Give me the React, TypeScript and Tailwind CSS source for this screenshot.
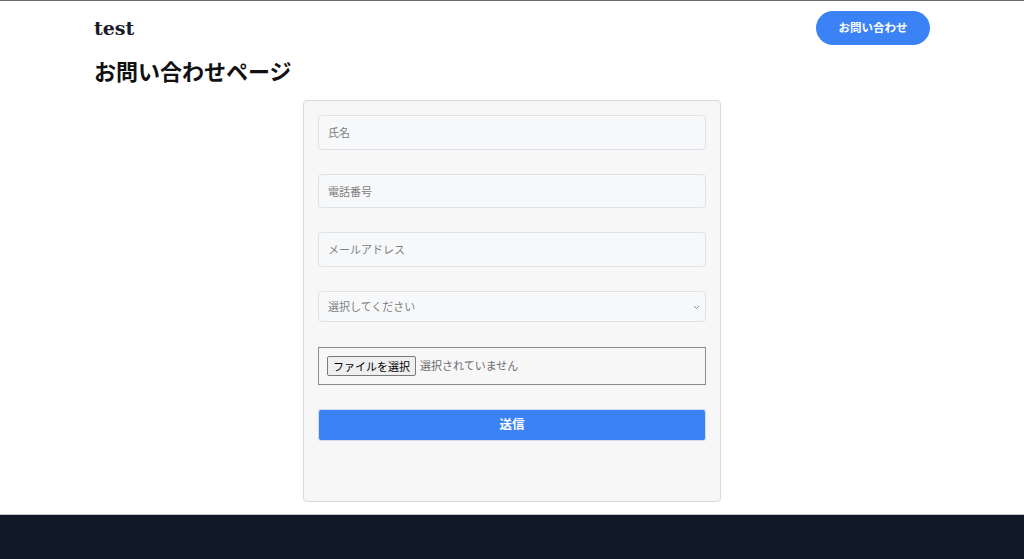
const jp = { fontFamily: '"Noto Sans CJK JP", "Noto Sans", sans-serif' }

function TextField({ placeholder }: { placeholder: string }) {
  return (
    <input
      type="text"
      placeholder={placeholder}
      className="h-[34.5px] w-full rounded-[4px] border border-[#dfe1e5] bg-[#f7f8fa] px-[9px] text-[11px] text-gray-800 outline-none placeholder:text-[#808080]"
    />
  )
}

export default function App() {
  return (
    <div className="flex min-h-screen flex-col border-t border-[#6b6b6b] bg-white" style={jp}>
      <header className="mx-auto flex w-[836px] items-center justify-between pt-[10px]">
        <a
          href="#"
          className="text-[19px] font-bold leading-none text-[#1a1a2a]"
          style={{ fontFamily: '"DejaVu Serif", "Noto Sans CJK JP", serif' }}
        >
          test
        </a>
        <button className="h-[34px] w-[114px] rounded-full bg-[#3b82f6] text-[11.5px] font-bold text-white">
          お問い合わせ
        </button>
      </header>

      <h1 className="mx-auto mt-[9px] w-[836px] text-[22px] font-bold leading-[32px] text-[#111]">
        お問い合わせページ
      </h1>

      <form
        onSubmit={(e) => e.preventDefault()}
        className="mx-auto mt-[14px] flex w-[418px] flex-col rounded-[4px] border border-[#dadada] bg-[#f7f7f7] px-[14px] pb-[60px] pt-[14px]"
      >
        <div className="flex flex-col gap-[24px]">
          <TextField placeholder="氏名" />
          <TextField placeholder="電話番号" />
          <TextField placeholder="メールアドレス" />
        </div>

        {/* select */}
        <div className="relative mt-[24px]">
          <select
            defaultValue=""
            className="h-[31.5px] w-full appearance-none rounded-[4px] border border-[#dfe1e5] bg-[#f7f8fa] px-[9px] text-[11px] text-[#808080] outline-none"
          >
            <option value="" disabled>
              選択してください
            </option>
          </select>
          <svg
            className="pointer-events-none absolute right-[6px] top-[14px]"
            width="7"
            height="5"
            viewBox="0 0 7 5"
            fill="none"
          >
            <path d="M1 1l2.5 2.5L6 1" stroke="#8a8a8a" strokeWidth="1" />
          </svg>
        </div>

        {/* file picker */}
        <div className="mt-[24.5px] flex h-[38px] items-center gap-[4px] border border-[#8a8a8a] px-[8px]">
          <span className="rounded-[2px] border border-[#7a7a7a] bg-[#efefef] px-[5px] py-[1px] text-[11px] leading-[16px] text-black">
            ファイルを選択
          </span>
          <span className="text-[11px] text-[#6b6b6b]">選択されていません</span>
        </div>

        <button
          type="submit"
          className="mt-[24px] h-[32px] w-full rounded-[3px] border border-[#d4dbe6] bg-[#3b82f6] text-[12.5px] font-bold text-white"
        >
          送信
        </button>
      </form>

      <footer className="mt-[12px] h-[45px] flex-1 border-t border-[#c8c8c8] bg-[#111827]" />
    </div>
  )
}
